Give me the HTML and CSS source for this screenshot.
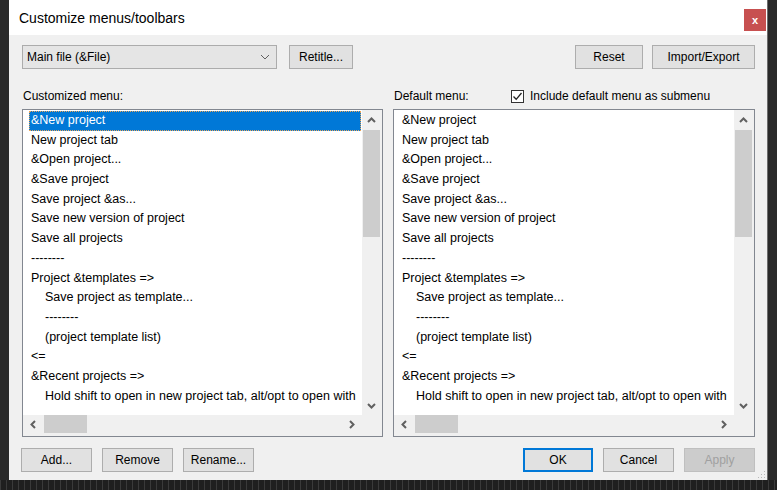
FILE: index.html
```html
<!DOCTYPE html>
<html lang="en">
<head>
    <meta charset="UTF-8">
    <meta name="viewport" content="width=device-width, initial-scale=1.0">
    <title>Customize menus/toolbars</title>
    <link rel="stylesheet" href="styles.css">
</head>
<body>
    <div class="dialog">
        <div class="titlebar">
            <span class="title">Customize menus/toolbars</span>
            <button class="close">x</button>
        </div>
        <div class="content">
            <div class="toolbar">
                <div class="combo">
                    <span>Main file (&amp;File)</span>
                    <svg width="10" height="6" viewBox="0 0 10 6"><polyline points="1,1 5,5 9,1" fill="none" stroke="#606060" stroke-width="1"/></svg>
                </div>
                <button class="btn retitle">Retitle...</button>
                <div class="spacer"></div>
                <button class="btn reset">Reset</button>
                <button class="btn import">Import/Export</button>
            </div>

            <div class="panes">
                <div class="pane">
                    <div class="pane-head"><span class="head-label">Customized menu:</span></div>
                    <div class="listbox">
                        <ul class="items">
                            <li class="selected">&amp;New project</li>
                            <li>New project tab</li>
                            <li>&amp;Open project...</li>
                            <li>&amp;Save project</li>
                            <li>Save project &amp;as...</li>
                            <li>Save new version of project</li>
                            <li>Save all projects</li>
                            <li>--------</li>
                            <li>Project &amp;templates =&gt;</li>
                            <li class="sub">Save project as template...</li>
                            <li class="sub">--------</li>
                            <li class="sub">(project template list)</li>
                            <li>&lt;=</li>
                            <li>&amp;Recent projects =&gt;</li>
                            <li class="sub">Hold shift to open in new project tab, alt/opt to open with</li>
                        </ul>
                        <div class="vscroll">
                            <div class="arrow"><svg width="9" height="6" viewBox="0 0 9 6"><polyline points="1,5 4.5,1.5 8,5" fill="none" stroke="#606060" stroke-width="2"/></svg></div>
                            <div class="vthumb"></div>
                            <div class="track"></div>
                            <div class="arrow"><svg width="9" height="6" viewBox="0 0 9 6"><polyline points="1,1 4.5,4.5 8,1" fill="none" stroke="#606060" stroke-width="2"/></svg></div>
                        </div>
                        <div class="hscroll">
                            <div class="arrow"><svg width="6" height="9" viewBox="0 0 6 9"><polyline points="5,1 1.5,4.5 5,8" fill="none" stroke="#606060" stroke-width="2"/></svg></div>
                            <div class="hthumb"></div>
                            <div class="track"></div>
                            <div class="arrow"><svg width="6" height="9" viewBox="0 0 6 9"><polyline points="1,1 4.5,4.5 1,8" fill="none" stroke="#606060" stroke-width="2"/></svg></div>
                        </div>
                        <div class="corner"></div>
                    </div>
                </div>

                <div class="pane">
                    <div class="pane-head">
                        <span class="head-label default-label">Default menu:</span>
                        <label class="check">
                            <span class="box"><svg width="11" height="11" viewBox="0 0 11 11"><polyline points="1.5,5.5 4.2,8.3 9.5,2" fill="none" stroke="#222" stroke-width="1.3"/></svg></span>
                            Include default menu as submenu
                        </label>
                    </div>
                    <div class="listbox">
                        <ul class="items">
                            <li>&amp;New project</li>
                            <li>New project tab</li>
                            <li>&amp;Open project...</li>
                            <li>&amp;Save project</li>
                            <li>Save project &amp;as...</li>
                            <li>Save new version of project</li>
                            <li>Save all projects</li>
                            <li>--------</li>
                            <li>Project &amp;templates =&gt;</li>
                            <li class="sub">Save project as template...</li>
                            <li class="sub">--------</li>
                            <li class="sub">(project template list)</li>
                            <li>&lt;=</li>
                            <li>&amp;Recent projects =&gt;</li>
                            <li class="sub">Hold shift to open in new project tab, alt/opt to open with</li>
                        </ul>
                        <div class="vscroll">
                            <div class="arrow"><svg width="9" height="6" viewBox="0 0 9 6"><polyline points="1,5 4.5,1.5 8,5" fill="none" stroke="#606060" stroke-width="2"/></svg></div>
                            <div class="vthumb"></div>
                            <div class="track"></div>
                            <div class="arrow"><svg width="9" height="6" viewBox="0 0 9 6"><polyline points="1,1 4.5,4.5 8,1" fill="none" stroke="#606060" stroke-width="2"/></svg></div>
                        </div>
                        <div class="hscroll">
                            <div class="arrow"><svg width="6" height="9" viewBox="0 0 6 9"><polyline points="5,1 1.5,4.5 5,8" fill="none" stroke="#606060" stroke-width="2"/></svg></div>
                            <div class="hthumb"></div>
                            <div class="track"></div>
                            <div class="arrow"><svg width="6" height="9" viewBox="0 0 6 9"><polyline points="1,1 4.5,4.5 1,8" fill="none" stroke="#606060" stroke-width="2"/></svg></div>
                        </div>
                        <div class="corner"></div>
                    </div>
                </div>
            </div>

            <div class="footer">
                <button class="btn">Add...</button>
                <button class="btn">Remove</button>
                <button class="btn">Rename...</button>
                <div class="spacer"></div>
                <button class="btn ok">OK</button>
                <button class="btn">Cancel</button>
                <button class="btn disabled">Apply</button>
            </div>
        </div>
        <svg class="grip" width="9" height="9" viewBox="0 0 9 9">
            <rect x="7" y="1" width="1" height="1" fill="#b8b8b8"/>
            <rect x="4" y="4" width="1" height="1" fill="#b8b8b8"/>
            <rect x="7" y="4" width="1" height="1" fill="#b8b8b8"/>
            <rect x="1" y="7" width="1" height="1" fill="#b8b8b8"/>
            <rect x="4" y="7" width="1" height="1" fill="#b8b8b8"/>
            <rect x="7" y="7" width="1" height="1" fill="#b8b8b8"/>
        </svg>
    </div>
    <div class="taskbar"></div>
</body>
</html>
```

FILE: styles.css
```css
body {
    margin: 0;
    background-color: #2a2a2a;
    font-family: "Liberation Sans", Arial, sans-serif;
    font-size: 12px;
    color: #000;
    width: 777px;
    height: 490px;
    overflow: hidden;
}

.dialog {
    position: relative;
    margin-left: 9px;
    width: 758px;
    height: 480px;
    background-color: #f0f0f0;
    border-right: 1px solid #6d6d6d;
}

.titlebar {
    height: 35px;
    background-color: #fff;
    display: flex;
    align-items: flex-start;
    justify-content: space-between;
    padding-left: 10px;
    padding-right: 1px;
}

.title {
    font-size: 14px;
    line-height: 16px;
    margin-top: 10px;
}

.close {
    margin-top: 9px;
    width: 22px;
    height: 22px;
    border: none;
    padding: 0;
    background-color: #c75050;
    color: #fff;
    font-family: "Liberation Sans", Arial, sans-serif;
    font-weight: bold;
    font-size: 11px;
    line-height: 20px;
}

.content {
    padding: 10px 12px 0 13px;
}

.toolbar, .footer {
    display: flex;
    align-items: center;
}

.spacer {
    flex-grow: 1;
}

.btn {
    height: 24px;
    padding: 0;
    border: 1px solid #adadad;
    background-color: #e1e1e1;
    color: #000;
    font-family: "Liberation Sans", Arial, sans-serif;
    font-size: 12px;
    width: 71px;
}

.combo {
    box-sizing: border-box;
    width: 255px;
    height: 24px;
    border: 1px solid #acacac;
    background-color: #e5e5e5;
    display: flex;
    align-items: center;
    justify-content: space-between;
    padding: 0 6px 0 4px;
}

.retitle {
    margin-left: 12px;
    width: 64px;
}

.reset {
    width: 68px;
    margin-right: 9px;
}

.import {
    width: 103px;
}

.panes {
    display: grid;
    grid-template-columns: 361px 362px;
    column-gap: 10px;
}

.pane-head {
    height: 40px;
    box-sizing: border-box;
    padding-top: 13px;
    line-height: 16px;
    display: flex;
    align-items: center;
}

.head-label {
    padding-left: 1px;
}

.default-label {
    width: 117px;
}

.check {
    display: flex;
    align-items: center;
}

.box {
    box-sizing: border-box;
    width: 13px;
    height: 13px;
    border: 1px solid #333;
    background-color: #fff;
    display: flex;
    align-items: center;
    justify-content: center;
    margin-right: 6px;
    margin-top: 1px;
}

.listbox {
    box-sizing: border-box;
    height: 328px;
    border: 1px solid #828790;
    background-color: #f0f0f0;
    padding: 0 2px 3px 0;
    display: grid;
    grid-template-columns: 1fr 18px;
    grid-template-rows: 1fr 18px;
}

.items {
    list-style: none;
    margin: 0;
    padding: 1px 1px 0 6px;
    background-color: #fff;
    overflow: hidden;
    font-size: 12.5px;
}

.items li {
    height: 19.7px;
    line-height: 19.7px;
    padding-left: 2px;
    white-space: nowrap;
}

.items li.sub {
    padding-left: 16px;
}

.items li.selected {
    background-color: #0078d7;
    color: #fff;
    outline: 1px dotted #e9a55a;
    outline-offset: -1px;
}

.vscroll {
    display: flex;
    flex-direction: column;
    background-color: #f0f0f0;
}

.vscroll .arrow {
    height: 19px;
    display: flex;
    align-items: center;
    justify-content: center;
}

.vthumb {
    margin: 1px 0 0 1px;
    height: 107px;
    background-color: #cdcdcd;
}

.track {
    flex-grow: 1;
}

.hscroll {
    display: flex;
    background-color: #f0f0f0;
}

.hscroll .arrow {
    width: 20px;
    display: flex;
    align-items: center;
    justify-content: center;
}

.hthumb {
    margin-left: 1px;
    width: 43px;
    background-color: #cdcdcd;
}

.corner {
    background-color: #f0f0f0;
}

.footer {
    margin-top: 11px;
    margin-left: -1px;
    gap: 10px;
}

.footer .spacer {
    margin: 0 -9px;
}

.ok {
    width: 70px;
    border: 2px solid #0078d7;
}

.disabled {
    background-color: #cccccc;
    border-color: #bfbfbf;
    color: #a0a0a0;
}

.grip {
    position: absolute;
    right: 1px;
    bottom: 1px;
}

.taskbar {
    height: 10px;
    background-color: #1f1f1f;
    background-image: repeating-linear-gradient(90deg, #3a3a3a 0 1px, transparent 1px 6px);
}
```
